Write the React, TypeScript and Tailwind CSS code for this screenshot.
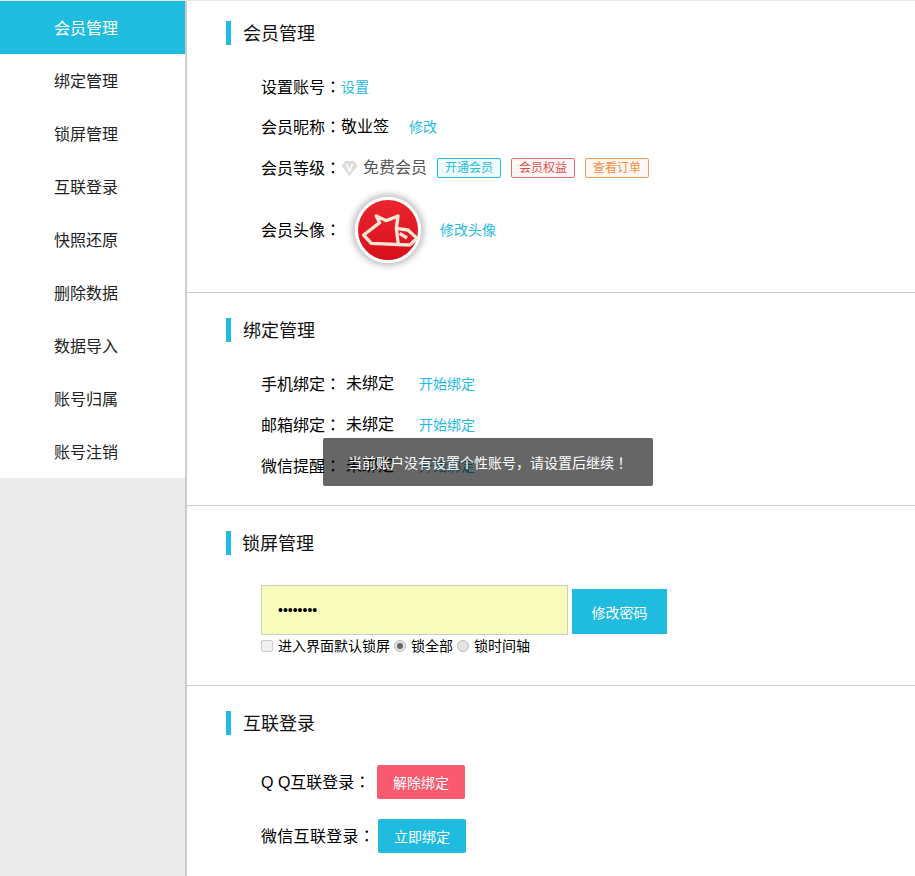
const CJK = "font-['Liberation_Sans','Noto_Sans_CJK_SC',sans-serif]";

const menu = ["会员管理", "绑定管理", "锁屏管理", "互联登录", "快照还原", "删除数据", "数据导入", "账号归属", "账号注销"];

function Label({ text }: { text: string }) {
  return (
    <span className="text-base text-black whitespace-nowrap">
      {text}
      <span className="font-['Noto_Sans_CJK_TC',sans-serif]">：</span>
    </span>
  );
}

function Heading({ text, cls = "ml-3" }: { text: string; cls?: string }) {
  return (
    <div className="flex items-center h-6">
      <span className="w-[5px] h-6 bg-[#1fbcdf]" />
      <span className={`${cls} pt-[2px] text-lg leading-6 text-[#111]`}>{text}</span>
    </div>
  );
}

function Link({ text, cls = "" }: { text: string; cls?: string }) {
  return <span className={`text-sm text-[#1fbcdf] whitespace-nowrap ${cls}`}>{text}</span>;
}

function Tag({ text, cls }: { text: string; cls: string }) {
  return (
    <span className={`w-16 h-5 flex items-center justify-center border rounded-[2px] text-xs leading-none ${cls}`}>{text}</span>
  );
}

function Radio({ on }: { on?: boolean }) {
  return (
    <span className="w-3 h-3 rounded-full border border-[#bbb] bg-[#e4e4e4] flex items-center justify-center">
      {on && <span className="w-[6px] h-[6px] rounded-full bg-[#666]" />}
    </span>
  );
}

function BindRow({ label }: { label: string }) {
  return (
    <div className="flex items-center h-[41px]">
      <Label text={label} />
      <span className="ml-[5px] w-[73px] text-base text-black">未绑定</span>
      <Link text="开始绑定" />
    </div>
  );
}

function Avatar() {
  return (
    <span className="w-[66px] h-[66px] rounded-full border-[3px] border-white bg-gradient-to-b from-[#ea2530] to-[#d80e1b] shadow-[0_0_6px_3px_rgba(0,0,0,0.25)] flex items-center justify-center">
      <svg width="60" height="60" viewBox="515 600 180 180" fill="none" stroke="#f8e4d2" strokeWidth="10" strokeLinejoin="round">
        <path d="M532 705 L580 668 L570 648 L600 662 L635 648 L630 685 L665 690 L692 715 L670 735 L555 730 Z" />
        <path d="M630 685 L636 733 M640 700 L662 714" />
      </svg>
    </span>
  );
}

export default function App() {
  return (
    <div className={`w-[915px] h-[876px] overflow-hidden flex border-t border-[#e5e7eb] bg-white relative ${CJK}`}>
      <aside className="w-[187px] shrink-0 bg-[#ebebeb] border-r-2 border-[#ccc]">
        {menu.map((m, i) => (
          <div
            key={m}
            className={`h-[53px] flex items-center pl-[54px] pt-[2px] text-base ${i === 0 ? "bg-[#1fbcdf] text-white" : "bg-white text-[#222]"}`}
          >
            {m}
          </div>
        ))}
      </aside>
      <main className="flex-1 min-w-0">
        <section className="h-[292px] border-b border-[#ccc] pl-[39px] pt-5">
          <Heading text="会员管理" />
          <div className="pl-[35px] mt-[22px]">
            <div className="flex items-center h-10">
              <Label text="设置账号" />
              <Link text="设置" />
            </div>
            <div className="flex items-center h-10">
              <Label text="会员昵称" />
              <span className="text-base text-black w-[68px]">敬业签</span>
              <Link text="修改" />
            </div>
            <div className="flex items-center h-10 mt-px">
              <Label text="会员等级" />
              <svg width="17" height="17" viewBox="0 0 17 17" className="shrink-0">
                <path d="M4 1 H13 L16.500 6 L8.500 16 L0.500 6 Z" fill="#ddd" />
                <path d="M5.500 4 L8.500 11 L11.500 4" fill="none" stroke="#fff" strokeWidth="1.500" />
              </svg>
              <span className="ml-[5px] text-base text-[#555] whitespace-nowrap">免费会员</span>
              <Tag text="开通会员" cls="ml-[10px] border-[#1fbcdf] bg-[#effbfd] text-[#1fbcdf]" />
              <Tag text="会员权益" cls="ml-[10px] border-[#e07070] bg-[#fdf6f5] text-[#e05050]" />
              <Tag text="查看订单" cls="ml-[10px] border-[#f59a50] bg-[#fdf8f3] text-[#f58a40]" />
            </div>
            <div className="flex items-center h-[72px] mt-[6px]">
              <Label text="会员头像" />
              <span className="ml-[14px]"><Avatar /></span>
              <Link text="修改头像" cls="ml-[19px]" />
            </div>
          </div>
        </section>

        <section className="h-[213px] border-b border-[#ccc] pl-[39px] pt-[25px]">
          <Heading text="绑定管理" />
          <div className="pl-[35px] mt-[21px]">
            <BindRow label="手机绑定" />
            <BindRow label="邮箱绑定" />
            <BindRow label="微信提醒" />
          </div>
        </section>

        <section className="h-[180px] border-b border-[#ccc] pl-[39px] pt-[25px]">
          <Heading text="锁屏管理" cls="ml-[11px]" />
          <div className="pl-[35px] mt-[30px]">
            <div className="flex items-start">
              <input
                type="password"
                readOnly
                defaultValue="abcdefgh"
                className="w-[307px] h-[50px] border border-[#ccc] bg-[#f9fdbc] pl-4 text-[14px] text-black outline-none"
              />
              <span className="ml-1 mt-1 w-[95px] h-[45px] pt-[2px] bg-[#1fbcdf] text-white text-sm flex items-center justify-center">修改密码</span>
            </div>
            <div className="flex items-center h-[18px] mt-[2px] text-sm leading-none text-black">
              <span className="w-3 h-3 rounded-[2px] border border-[#ccc] bg-[#f0f0f0]" />
              <span className="ml-[5px]">进入界面默认锁屏</span>
              <span className="ml-1"><Radio on /></span>
              <span className="ml-[5px]">锁全部</span>
              <span className="ml-1"><Radio /></span>
              <span className="ml-[5px]">锁时间轴</span>
            </div>
          </div>
        </section>

        <section className="pl-[39px] pt-[25px]">
          <Heading text="互联登录" />
          <div className="pl-[35px] mt-[30px]">
            <div className="flex items-center h-[34px]">
              <span className="w-[116px] text-base text-black whitespace-nowrap">Q Q互联登录<span className="font-['Noto_Sans_CJK_TC',sans-serif]">：</span></span>
              <span className="w-[88px] h-[34px] pt-[2px] rounded-[2px] bg-[#f95a70] text-white text-sm flex items-center justify-center">解除绑定</span>
            </div>
            <div className="flex items-center h-[34px] mt-5">
              <span className="w-[117px] text-base text-black whitespace-nowrap tracking-[0.3px]">微信互联登录<span className="font-['Noto_Sans_CJK_TC',sans-serif]">：</span></span>
              <span className="w-[88px] h-[34px] pt-[2px] rounded-[2px] bg-[#1fbcdf] text-white text-sm flex items-center justify-center">立即绑定</span>
            </div>
          </div>
        </section>
      </main>

      <div className="absolute left-[323px] top-[437px] w-[330px] h-[48px] rounded-[2px] bg-[rgba(0,0,0,0.6)] text-white text-sm leading-[48px] text-center whitespace-nowrap">
        当前账户没有设置个性账号，请设置后继续<span className="font-['Noto_Sans_CJK_TC',sans-serif]">！</span>
      </div>
    </div>
  );
}
